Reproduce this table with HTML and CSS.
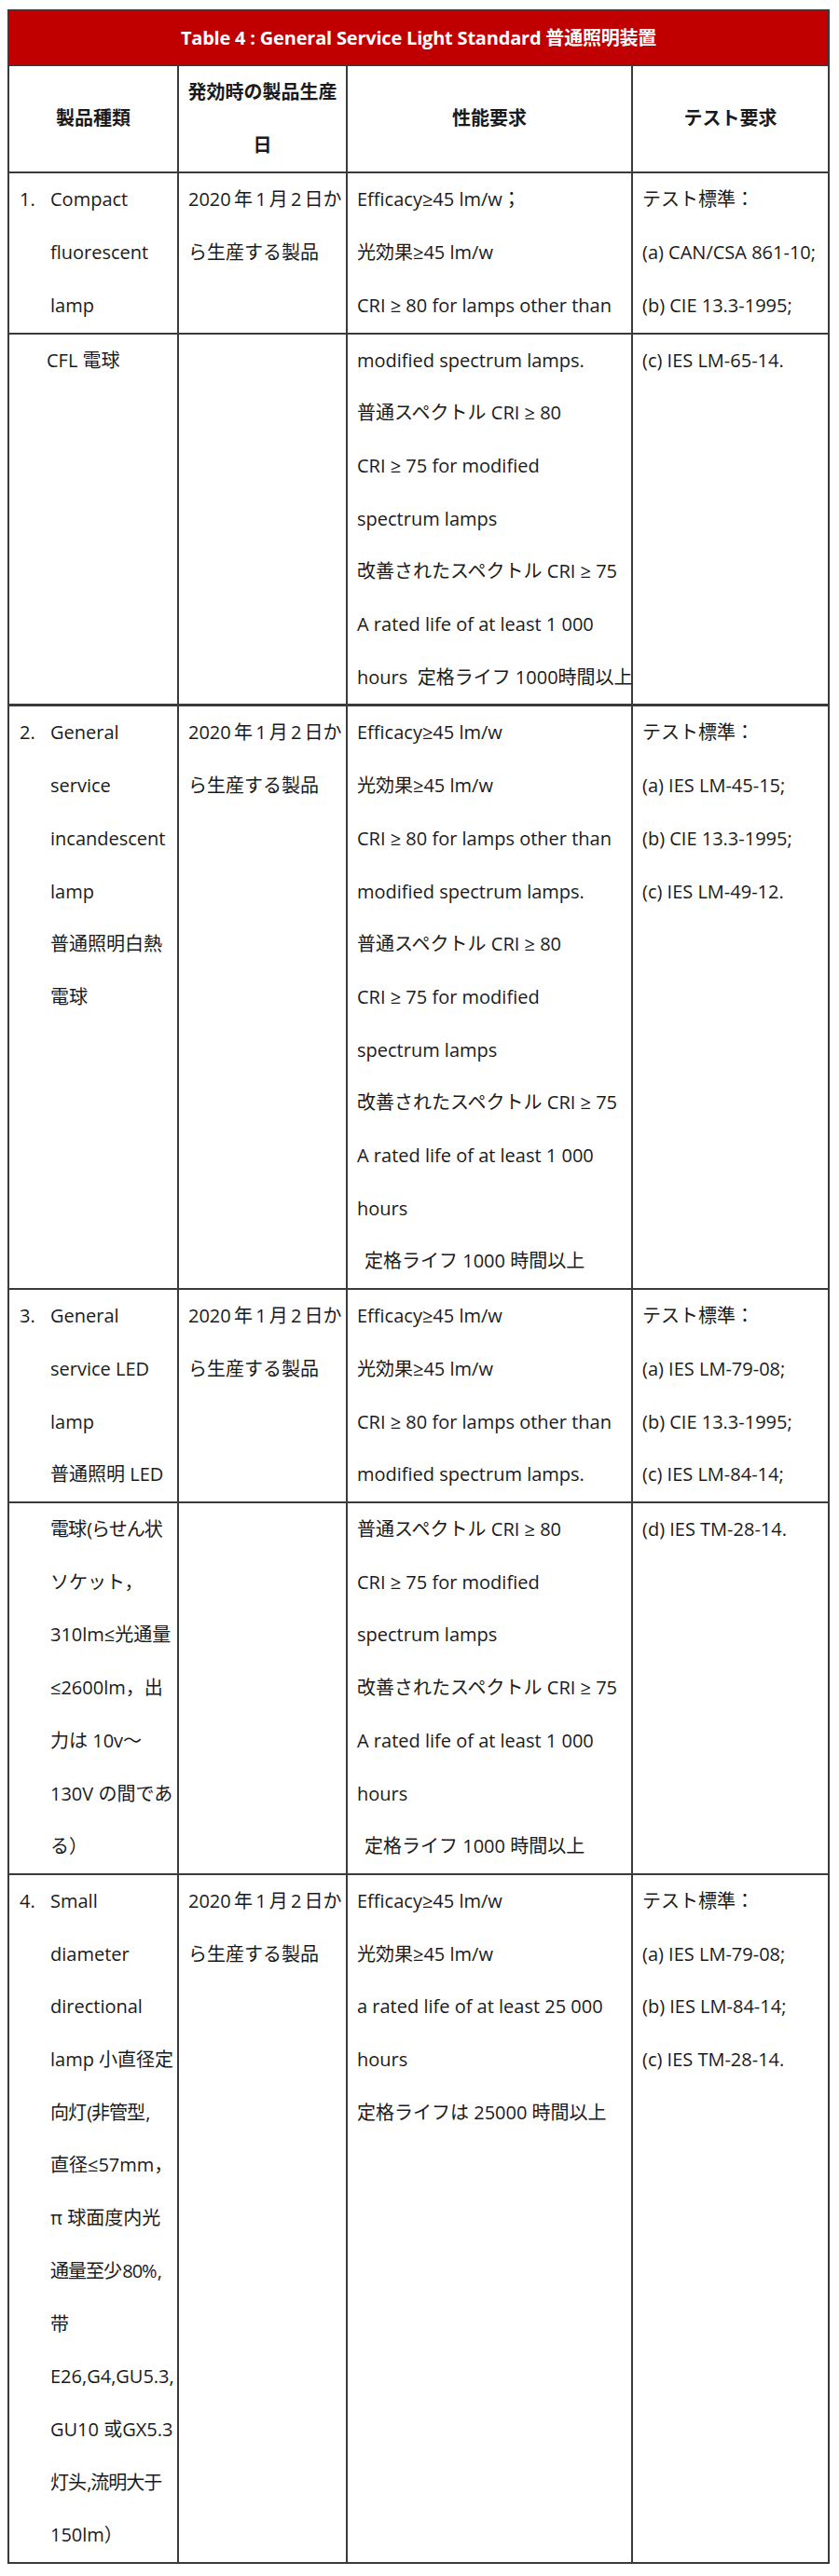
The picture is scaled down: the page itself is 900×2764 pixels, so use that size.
FILE: index.html
```html
<!DOCTYPE html>
<html lang="ja">
<head>
<meta charset="utf-8">
<title>Table 4</title>
<link rel="stylesheet" href="styles.css">
</head>
<body>
<table class="spec">
  <colgroup>
    <col class="w1"><col class="w2"><col class="w3"><col class="w4">
  </colgroup>
  <tr>
    <td class="title" colspan="4">Table 4 : General Service Light Standard 普通照明装置</td>
  </tr>
  <tr class="head">
    <td><div class="l">製品種類</div></td>
    <td><div class="l">発効時の製品生産</div><div class="l">日</div></td>
    <td><div class="l">性能要求</div></td>
    <td><div class="l">テスト要求</div></td>
  </tr>

  <tr>
    <td class="c1">
      <div class="l"><span class="num">1.</span>Compact</div>
      <div class="l ind">fluorescent</div>
      <div class="l ind">lamp</div>
    </td>
    <td><div class="l date">2020 年 1 月 2 日か</div><div class="l">ら生産する製品</div></td>
    <td>
      <div class="l">Efficacy≥45 lm/w；</div>
      <div class="l">光効果≥45 lm/w</div>
      <div class="l">CRI ≥ 80 for lamps other than</div>
    </td>
    <td>
      <div class="l">テスト標準：</div>
      <div class="l">(a) CAN/CSA 861-10;</div>
      <div class="l">(b) CIE 13.3-1995;</div>
    </td>
  </tr>
  <tr>
    <td class="c1"><div class="l ind2">CFL 電球</div></td>
    <td></td>
    <td>
      <div class="l">modified spectrum lamps.</div>
      <div class="l">普通スペクトル CRI ≥ 80</div>
      <div class="l">CRI ≥ 75 for modified</div>
      <div class="l">spectrum lamps</div>
      <div class="l">改善されたスペクトル CRI ≥ 75</div>
      <div class="l">A rated life of at least 1 000</div>
      <div class="l pre">hours  定格ライフ 1000時間以上</div>
    </td>
    <td><div class="l">(c) IES LM-65-14.</div></td>
  </tr>

  <tr class="sep">
    <td class="c1">
      <div class="l"><span class="num">2.</span>General</div>
      <div class="l ind">service</div>
      <div class="l ind">incandescent</div>
      <div class="l ind">lamp</div>
      <div class="l ind">普通照明白熱</div>
      <div class="l ind">電球</div>
    </td>
    <td><div class="l date">2020 年 1 月 2 日か</div><div class="l">ら生産する製品</div></td>
    <td>
      <div class="l">Efficacy≥45 lm/w</div>
      <div class="l">光効果≥45 lm/w</div>
      <div class="l">CRI ≥ 80 for lamps other than</div>
      <div class="l">modified spectrum lamps.</div>
      <div class="l">普通スペクトル CRI ≥ 80</div>
      <div class="l">CRI ≥ 75 for modified</div>
      <div class="l">spectrum lamps</div>
      <div class="l">改善されたスペクトル CRI ≥ 75</div>
      <div class="l">A rated life of at least 1 000</div>
      <div class="l">hours</div>
      <div class="l lead">定格ライフ 1000 時間以上</div>
    </td>
    <td>
      <div class="l">テスト標準：</div>
      <div class="l">(a) IES LM-45-15;</div>
      <div class="l">(b) CIE 13.3-1995;</div>
      <div class="l">(c) IES LM-49-12.</div>
    </td>
  </tr>

  <tr>
    <td class="c1">
      <div class="l"><span class="num">3.</span>General</div>
      <div class="l ind">service LED</div>
      <div class="l ind">lamp</div>
      <div class="l ind">普通照明 LED</div>
    </td>
    <td><div class="l date">2020 年 1 月 2 日か</div><div class="l">ら生産する製品</div></td>
    <td>
      <div class="l">Efficacy≥45 lm/w</div>
      <div class="l">光効果≥45 lm/w</div>
      <div class="l">CRI ≥ 80 for lamps other than</div>
      <div class="l">modified spectrum lamps.</div>
    </td>
    <td>
      <div class="l">テスト標準：</div>
      <div class="l">(a) IES LM-79-08;</div>
      <div class="l">(b) CIE 13.3-1995;</div>
      <div class="l">(c) IES LM-84-14;</div>
    </td>
  </tr>
  <tr>
    <td class="c1">
      <div class="l ind tight">電球 (らせん状</div>
      <div class="l ind">ソケット，</div>
      <div class="l ind">310lm≤光通量</div>
      <div class="l ind">≤2600lm，出</div>
      <div class="l ind">力は 10v～</div>
      <div class="l ind">130V の間であ</div>
      <div class="l ind">る）</div>
    </td>
    <td></td>
    <td>
      <div class="l">普通スペクトル CRI ≥ 80</div>
      <div class="l">CRI ≥ 75 for modified</div>
      <div class="l">spectrum lamps</div>
      <div class="l">改善されたスペクトル CRI ≥ 75</div>
      <div class="l">A rated life of at least 1 000</div>
      <div class="l">hours</div>
      <div class="l lead">定格ライフ 1000 時間以上</div>
    </td>
    <td><div class="l">(d) IES TM-28-14.</div></td>
  </tr>

  <tr>
    <td class="c1">
      <div class="l"><span class="num">4.</span>Small</div>
      <div class="l ind">diameter</div>
      <div class="l ind">directional</div>
      <div class="l ind">lamp 小直径定</div>
      <div class="l ind tight">向灯 (非管型 ,</div>
      <div class="l ind">直径≤57mm，</div>
      <div class="l ind">π 球面度内光</div>
      <div class="l ind tight">通量至少 80% ,</div>
      <div class="l ind">带</div>
      <div class="l ind">E26,G4,GU5.3,</div>
      <div class="l ind">GU10 或GX5.3</div>
      <div class="l ind tight">灯头 ,流明大于</div>
      <div class="l ind">150lm）</div>
    </td>
    <td><div class="l date">2020 年 1 月 2 日か</div><div class="l">ら生産する製品</div></td>
    <td>
      <div class="l">Efficacy≥45 lm/w</div>
      <div class="l">光効果≥45 lm/w</div>
      <div class="l">a rated life of at least 25 000</div>
      <div class="l">hours</div>
      <div class="l">定格ライフは 25000 時間以上</div>
    </td>
    <td>
      <div class="l">テスト標準：</div>
      <div class="l">(a) IES LM-79-08;</div>
      <div class="l">(b) IES LM-84-14;</div>
      <div class="l">(c) IES TM-28-14.</div>
    </td>
  </tr>
</table>
</body>
</html>
```
FILE: styles.css
```css
html, body {
  margin: 0;
  padding: 0;
  background: #ffffff;
}

body {
  font-family: "Open Sans", "Noto Sans CJK JP", sans-serif;
  font-size: 20px;
  color: #1a1a1a;
}

.spec {
  border-collapse: collapse;
  margin: 10px 0 0 8px;
  table-layout: fixed;
  width: 880px;
}

.w1 { width: 182px; }
.w2 { width: 181px; }
.w3 { width: 306px; }
.w4 { width: 211px; }

.spec td {
  border: 2px solid #3a3a3a;
  padding: 0 2px 0 10px;
  vertical-align: top;
}

.spec td.title {
  background: #c00000;
  color: #ffffff;
  font-weight: 700;
  text-align: center;
  line-height: 57px;
  padding: 0;
  letter-spacing: -0.2px;
}

.head td {
  font-weight: 700;
  text-align: center;
  vertical-align: middle;
  padding: 0;
}

.l {
  line-height: 56.7px;
  white-space: nowrap;
}

.pre {
  white-space: pre;
}

.lead {
  padding-left: 8px;
}

.date {
  word-spacing: -2px;
}

.spec td.c1 {
  padding-left: 11px;
  padding-right: 0;
}

.num {
  display: inline-block;
  width: 33px;
}

.ind {
  padding-left: 33px;
}

.ind2 {
  padding-left: 29px;
}

.tight {
  letter-spacing: -1px;
  word-spacing: -3px;
}

.sep td {
  border-top-width: 3px;
}
```
